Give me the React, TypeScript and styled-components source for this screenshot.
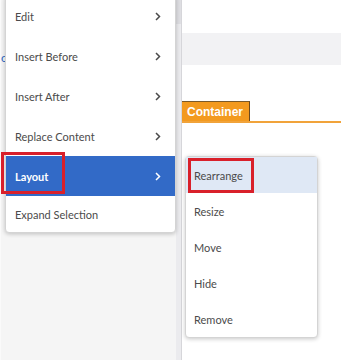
import React from 'react';
import styled, { createGlobalStyle } from 'styled-components';

const GlobalStyle = createGlobalStyle`
    html, body {
        margin: 0;
        padding: 0;
        background: #ffffff;
    }
    #root {
        width: 341px;
        height: 360px;
    }
`;

const Page = styled.div`
    position: relative;
    display: flex;
    width: 341px;
    height: 360px;
    overflow: hidden;
    font-family: Lato, 'Open Sans', sans-serif;
`;

const SidePane = styled.div`
    width: 176px;
    flex-shrink: 0;
    background: #f5f5f5;
    border-left: 1px solid #fafafa;
    box-sizing: border-box;
    padding-top: 50px;
`;

const PeekText = styled.span`
    display: block;
    color: #2d6bc4;
    font-size: 12px;
`;

const Splitter = styled.div`
    width: 6px;
    flex-shrink: 0;
    background: linear-gradient(to bottom, #dedee2 0, #dedee2 24px, #ebebee 24px);
    border-right: 1px solid #d6d6da;
    box-sizing: border-box;
`;

const Canvas = styled.div`
    flex: 1;
    display: flex;
    flex-direction: column;
    background: #ffffff;
`;

const Band = styled.div`
    margin-top: 33px;
    height: 32px;
    background: #f2f2f4;
`;

const ComponentBar = styled.div`
    margin-top: 36px;
    display: flex;
    align-items: flex-end;
    border-bottom: 2px solid #f1a33a;
`;

const ComponentTab = styled.div`
    height: 19px;
    padding: 0 6px 0 5px;
    display: flex;
    align-items: center;
    background: #f39a1f;
    border-top: 1px solid #7a5a2a;
    border-right: 1px solid #6a4a20;
    color: #ffffff;
    font-family: 'Liberation Sans', Arial, sans-serif;
    font-weight: bold;
    font-size: 12px;
`;

const Menu = styled.div<{ $left: number; $top: number; $width: number }>`
    position: absolute;
    left: ${(p) => p.$left}px;
    top: ${(p) => p.$top}px;
    width: ${(p) => p.$width}px;
    display: flex;
    flex-direction: column;
    background: #ffffff;
    border: 1px solid #d4d4d4;
    border-radius: 4px;
    box-shadow: 0 1px 4px rgba(0, 0, 0, 0.22);
    box-sizing: border-box;
`;

const MenuRow = styled.div<{ $height: number; $active?: boolean; $hover?: boolean; $pad: number }>`
    position: relative;
    display: flex;
    align-items: center;
    justify-content: space-between;
    height: ${(p) => p.$height}px;
    padding: 0 14px 0 ${(p) => p.$pad}px;
    font-size: 11px;
    color: ${(p) => (p.$active ? '#ffffff' : '#4b4b4b')};
    font-weight: ${(p) => (p.$active ? 700 : 400)};
    background: ${(p) => (p.$active ? '#326ac7' : p.$hover ? '#dfe8f5' : 'transparent')};
`;

const Callout = styled.div<{ $left: number; $top: number; $width: number; $height: number }>`
    position: absolute;
    left: ${(p) => p.$left}px;
    top: ${(p) => p.$top}px;
    width: ${(p) => p.$width}px;
    height: ${(p) => p.$height}px;
    border: 3px solid #d9202a;
    box-sizing: border-box;
    pointer-events: none;
`;

const Chevron = ({ color }: { color: string }) => (
    <svg width="6" height="9" viewBox="0 0 6 9">
        <path d="M1 1 L4.5 4.5 L1 8" fill="none" stroke={color} strokeWidth="1.5" />
    </svg>
);

const mainItems = ['Edit', 'Insert Before', 'Insert After', 'Replace Content', 'Layout', 'Expand Selection'];
const subItems = ['Rearrange', 'Resize', 'Move', 'Hide', 'Remove'];

export default function App() {
    return (
        <Page>
            <GlobalStyle />
            <SidePane>
                <PeekText>c</PeekText>
            </SidePane>
            <Splitter />
            <Canvas>
                <Band />
                <ComponentBar>
                    <ComponentTab>Container</ComponentTab>
                </ComponentBar>
            </Canvas>

            <Menu $left={5} $top={-5} $width={171}>
                {mainItems.map((item, i) => {
                    const isLayout = item === 'Layout';
                    const last = i === mainItems.length - 1;
                    return (
                        <MenuRow key={item} $height={last ? 36 : 40} $active={isLayout} $pad={9}>
                            <span>{item}</span>
                            {!last && <Chevron color={isLayout ? '#ffffff' : '#4b4b4b'} />}
                        </MenuRow>
                    );
                })}
            </Menu>

            <Menu $left={185} $top={156} $width={133}>
                {subItems.map((item, i) => (
                    <MenuRow key={item} $height={36} $hover={i === 0} $pad={8}>
                        <span>{item}</span>
                    </MenuRow>
                ))}
            </Menu>

            <Callout $left={1} $top={152} $width={64} $height={42} />
            <Callout $left={188} $top={158} $width={66} $height={35} />
        </Page>
    );
}
